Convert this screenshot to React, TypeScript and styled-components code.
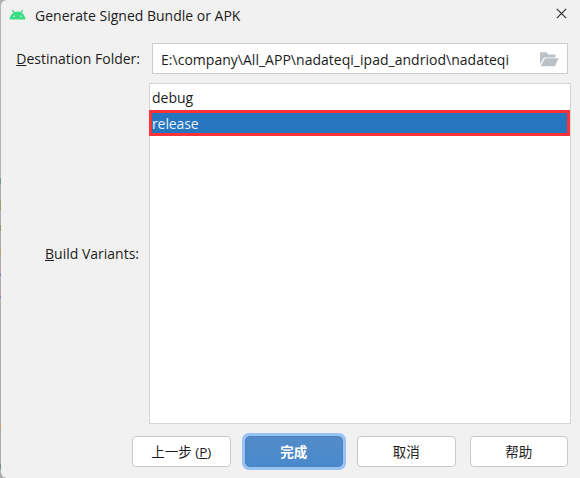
import React from 'react';
import styled, { createGlobalStyle } from 'styled-components';

const GlobalStyle = createGlobalStyle`
  * { box-sizing: border-box; }
  body { margin: 0; overflow: hidden; }
`;

const Backdrop = styled.div`
  width: 580px;
  height: 478px;
  padding-left: 1px;
  background: linear-gradient(
    #b4b4b4 0 178px, #6f9a80 178px 184px, #adadad 184px 200px, #93a36d 200px 210px,
    #adadad 210px 225px, #86a064 225px 231px, #adadad 231px 247px, #b5a66c 247px 256px,
    #adadad 256px 268px, #c0a3ad 268px 273px, #8888b4 273px 276px, #adadad 276px 291px,
    #c0a3ad 291px 296px, #8888b4 296px 298px, #adadad 298px 423px, #c79e70 423px 430px,
    #adadad 430px 464px, #71888c 464px 469px, #adadad 469px
  );
`;

const Dialog = styled.main`
  display: flex;
  flex-direction: column;
  height: 478px;
  overflow: hidden;
  background: #f1f1f1;
  border-top-left-radius: 6px;
  border-bottom-left-radius: 6px;
  color: #1c1c1c;
  font: 14px/20px "Open Sans", "Noto Sans CJK SC", sans-serif;
`;

const TitleBar = styled.header`
  display: flex;
  align-items: center;
  height: 31px;
  padding: 0 13px 0 8px;
  flex: none;
`;

const Title = styled.h1`
  flex: 1;
  margin: 0 0 0 9px;
  font-size: 14px;
  font-weight: 400;
`;

const Text = styled.span<{ $tracking?: number }>`
  letter-spacing: ${(p) => p.$tracking ?? 0}px;
  white-space: nowrap;
`;

const IconButton = styled.button`
  display: flex;
  padding: 0;
  border: 0;
  background: none;
`;

const CloseButton = styled(IconButton)`
  margin-top: -5px;
`;

const FolderRow = styled.div`
  display: flex;
  align-items: center;
  height: 31px;
  margin: 12px 12px 0 0;
  flex: none;
`;

const Label = styled.label<{ $width: number }>`
  width: ${(p) => p.$width}px;
  padding-top: 1px;
  flex: none;
  text-align: right;
`;

const Mnemonic = styled.span`
  text-decoration: underline;
  text-decoration-thickness: 1px;
  text-underline-offset: 1px;
  text-decoration-skip-ink: none;
`;

const Field = styled.div`
  display: flex;
  align-items: center;
  justify-content: space-between;
  flex: 1;
  height: 31px;
  margin-left: 12px;
  padding: 2px 8px 0 8px;
  border: 1px solid #cdcdcd;
  background: #fff;
`;

const VariantsRow = styled.div`
  display: flex;
  align-items: center;
  height: 341px;
  margin: 9px 9px 0 0;
  flex: none;
`;

const List = styled.ul`
  flex: 1;
  height: 341px;
  margin: 0 0 0 10px;
  padding: 0;
  border: 1px solid #d4d5d6;
  background: #fff;
  list-style: none;
`;

const Item = styled.li<{ $selected?: boolean }>`
  display: flex;
  align-items: center;
  height: 26px;
  padding: 2px 0 0 2px;
  ${(p) =>
    p.$selected &&
    `
    margin: 0 0 0 -1px;
    padding: 1px 0 0;
    border: 3px solid #fb3236;
    background: #2675bf;
    color: #e9f1f8;
  `}
`;

const Footer = styled.footer`
  display: flex;
  justify-content: flex-end;
  align-items: center;
  gap: 14px;
  height: 31px;
  margin: 12px 12px 0 0;
  flex: none;
`;

const Button = styled.button<{ $primary?: boolean }>`
  display: flex;
  align-items: center;
  justify-content: center;
  width: 98.5px;
  height: 31px;
  padding: 1px 0 0;
  border: 1px solid ${(p) => (p.$primary ? '#4a84c4' : '#c9c9c9')};
  border-radius: 4px;
  background: ${(p) => (p.$primary ? 'linear-gradient(#528cc7, #4989cc)' : '#fff')};
  box-shadow: ${(p) => (p.$primary ? '0 0 0 3px #98c3f4' : 'none')};
  color: ${(p) => (p.$primary ? '#fff' : '#1c1c1c')};
  font: ${(p) => (p.$primary ? 700 : 400)} 13.5px/20px "Open Sans", "Noto Sans CJK SC", sans-serif;
`;

const AndroidIcon = () => (
  <svg width="17" height="13" viewBox="0 0 17 13">
    <path d="M.5 10.500C.7 7.500 2.200 5.200 4.300 3.700L2.900 1.300L3.900.600L5.500 3.100Q8.500 1.900 11.500 3.100L13.100.600L14.100 1.300L12.700 3.700C14.800 5.200 16.300 7.500 16.500 10.500Z" fill="#3ddc84" />
    <circle cx="5" cy="7.300" r=".8" fill="#dff8e9" />
    <circle cx="12" cy="7.300" r=".8" fill="#dff8e9" />
  </svg>
);

const CloseIcon = () => (
  <svg width="11" height="11" viewBox="0 0 11 11">
    <path d="M.8.800L10.200 10.200M10.200.800L.8 10.200" stroke="#2b2b2b" strokeWidth="1.100" />
  </svg>
);

const FolderIcon = () => (
  <svg width="19" height="15" viewBox="0 0 19 15">
    <path d="M0 .3H6.500L8 2.500H15.500V5.500H4L0 12.500Z" fill="#bcc1c5" />
    <path d="M4.800 6.300H18.700L15 14.300H.7Z" fill="#bcc1c5" />
  </svg>
);

export default function App() {
  return (
    <>
      <GlobalStyle />
      <Backdrop>
        <Dialog>
          <TitleBar>
            <AndroidIcon />
            <Title><Text>Generate Signed Bundle or APK</Text></Title>
            <CloseButton aria-label="Close"><CloseIcon /></CloseButton>
          </TitleBar>
          <FolderRow>
            <Label $width={139}><Text><Mnemonic>D</Mnemonic>estination Folder:</Text></Label>
            <Field>
              <Text $tracking={0.02}>E:\company\All_APP\nadateqi_ipad_andriod\nadateqi</Text>
              <IconButton aria-label="Browse"><FolderIcon /></IconButton>
            </Field>
          </FolderRow>
          <VariantsRow>
            <Label $width={138}><Text><Mnemonic>B</Mnemonic>uild Variants:</Text></Label>
            <List>
              <Item><Text>debug</Text></Item>
              <Item $selected><Text $tracking={-0.1}>release</Text></Item>
            </List>
          </VariantsRow>
          <Footer>
            <Button><Text>上一步 (<Mnemonic>P</Mnemonic>)</Text></Button>
            <Button $primary>完成</Button>
            <Button>取消</Button>
            <Button>帮助</Button>
          </Footer>
        </Dialog>
      </Backdrop>
    </>
  );
}
